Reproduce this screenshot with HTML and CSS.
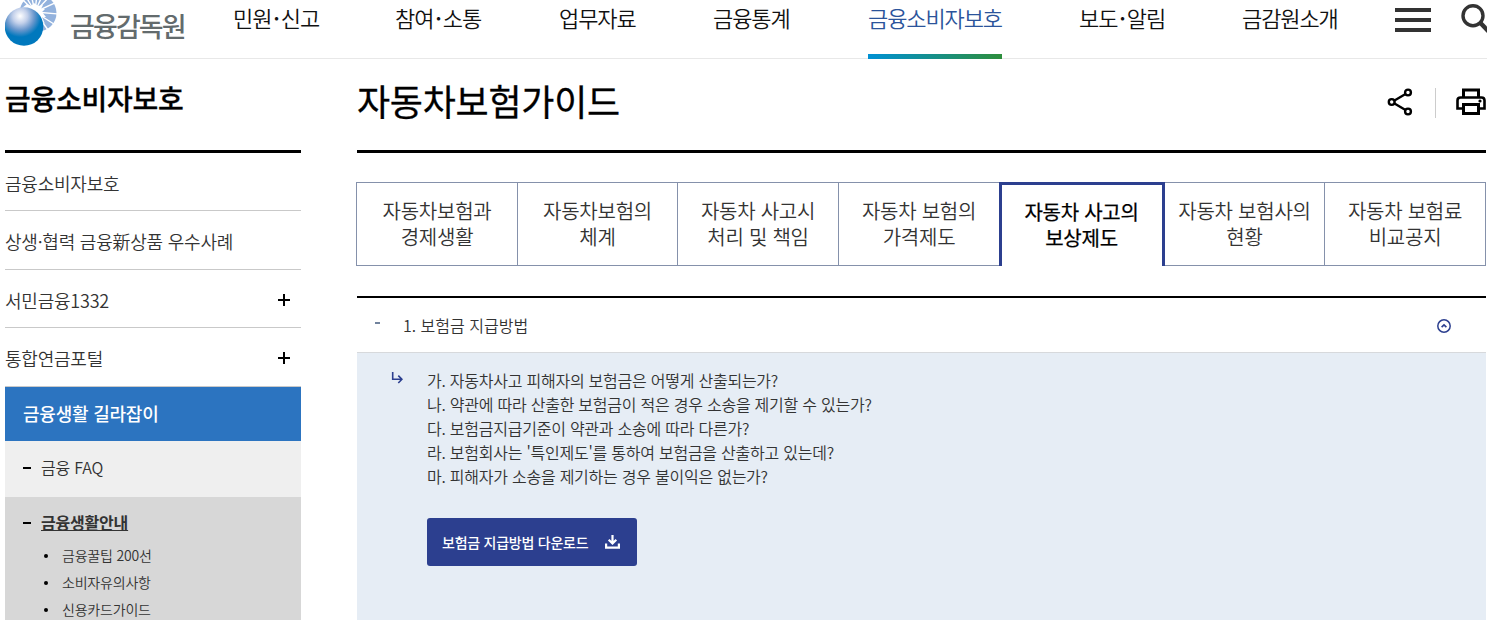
FILE: index.html
```html
<!DOCTYPE html>
<html lang="ko">
<head>
<meta charset="utf-8">
<title>자동차보험가이드</title>
<link rel="stylesheet" href="styles.css">
</head>
<body>
<header class="header">
  <a class="logo">
    <svg class="logo-mark" width="52" height="46" viewBox="0 0 52 46">
      <defs>
        <radialGradient id="ball" cx="0.4" cy="0.23" r="0.64">
          <stop offset="0" stop-color="#fff"/>
          <stop offset="0.3" stop-color="#c3d0ea"/>
          <stop offset="0.58" stop-color="#6796cc"/>
          <stop offset="0.85" stop-color="#0078bd"/>
        </radialGradient>
      </defs>
      <circle cx="33" cy="13" r="18.500" fill="#93b2dd"/>
      <path d="M17 8L22 4L26 6L29 3L33 6L38 5L36 9L40 9L37 12L41 17L37 17L40 24L34 18z" fill="#fff"/>
      <path d="M30 12L14 -4M30 12L20 -5M30 12L26 -6M30 12L32 -6M30 12L38 -6M30 12L46 -5M30 12L54 1M30 12L54 14M30 12L52 26M30 12L46 34" stroke="#fff" stroke-width="1.400"/>
      <circle cx="19" cy="26.500" r="19.300" fill="url(#ball)"/>
    </svg>
    <span class="logo-text">금융감독원</span>
  </a>
  <nav class="nav">
    <a><span>민원<em>·</em>신고</span></a>
    <a><span>참여<em>·</em>소통</span></a>
    <a><span>업무자료</span></a>
    <a><span>금융통계</span></a>
    <a class="current"><span>금융소비자보호</span></a>
    <a><span>보도<em>·</em>알림</span></a>
    <a><span>금감원소개</span></a>
  </nav>
  <div class="menu-icon"><i></i><i></i><i></i></div>
  <svg class="search-icon" width="28" height="34" viewBox="0 0 28 34" fill="none" stroke="#333">
    <circle cx="13" cy="15.700" r="10" stroke-width="3.400"/>
    <path d="M20 22.500L32 35" stroke-width="4.500"/>
  </svg>
</header>

<div class="page">
  <aside class="side">
    <h2 class="side-title">금융소비자보호</h2>
    <ul class="side-list">
      <li>금융소비자보호</li>
      <li>상생·협력 금융新상품 우수사례</li>
      <li>서민금융1332 <b class="plus"></b></li>
      <li>통합연금포털 <b class="plus"></b></li>
    </ul>
    <div class="side-current">금융생활 길라잡이</div>
    <div class="side-sub"><i class="dash"></i>금융 FAQ</div>
    <div class="side-open">
      <div class="side-open-title"><i class="dash"></i><u>금융생활안내</u></div>
      <ul class="side-links">
        <li>금융꿀팁 200선</li>
        <li>소비자유의사항</li>
        <li>신용카드가이드</li>
      </ul>
    </div>
  </aside>

  <main class="main">
    <div class="title-row">
      <h1>자동차보험가이드</h1>
      <div class="tools">
        <svg width="26" height="28" viewBox="0 0 26 28" fill="none" stroke="#000" stroke-width="2.400">
          <path d="M7.500 12.500L18.500 6M7.500 15.500L18.500 22"/>
          <circle cx="4.700" cy="14" r="2.900"/><circle cx="21" cy="4.500" r="2.900"/><circle cx="21" cy="23.500" r="2.900"/>
        </svg>
        <i class="divider"></i>
        <svg width="30" height="28" viewBox="0 0 30 28" fill="none" stroke="#000" stroke-width="3">
          <path d="M7.500 9V1.900h15V9"/>
          <path d="M7 20.500H1.500V12.500Q1.500 9.500 4.500 9.500H25.500Q28.500 9.500 28.500 12.500V20.500H23" stroke-width="2.600"/>
          <path d="M7.500 16.500h15v9h-15z"/>
          <circle cx="24" cy="13" r="1.600" fill="#000" stroke="none"/>
        </svg>
      </div>
    </div>
    <div class="tabs">
      <a>자동차보험과<br>경제생활</a>
      <a>자동차보험의<br>체계</a>
      <a>자동차 사고시<br>처리 및 책임</a>
      <a class="before">자동차 보험의<br>가격제도</a>
      <a class="active">자동차 사고의<br>보상제도</a>
      <a>자동차 보험사의<br>현황</a>
      <a>자동차 보험료<br>비교공지</a>
    </div>
    <section class="accordion">
      <div class="question">
        <i class="q-dash"></i>
        <span>1. 보험금 지급방법</span>
        <svg width="14" height="14" viewBox="0 0 14 14" fill="none" stroke="#2c3f8f">
          <circle cx="7" cy="7" r="6.200" stroke-width="1.500"/>
          <path d="M4.600 8.200L7 5.900L9.400 8.200" stroke-width="1.600"/>
        </svg>
      </div>
      <div class="answer">
        <svg class="arrow" width="12" height="13" viewBox="0 0 12 13" fill="none" stroke="#2c3f8f" stroke-width="1.600">
          <path d="M1.700 0V7.300H10.500M7.300 3.600L10.900 7.300L7.300 11"/>
        </svg>
        <div>
          <p>가. 자동차사고 피해자의 보험금은 어떻게 산출되는가?<br>나. 약관에 따라 산출한 보험금이 적은 경우 소송을 제기할 수 있는가?<br>다. 보험금지급기준이 약관과 소송에 따라 다른가?<br>라. 보험회사는 '특인제도'를 통하여 보험금을 산출하고 있는데?<br>마. 피해자가 소송을 제기하는 경우 불이익은 없는가?</p>
          <a class="download">보험금 지급방법 다운로드
            <svg width="15" height="14" viewBox="0 0 15 14" fill="none" stroke="#fff" stroke-width="2.200">
              <path d="M7.500 0V7M3.700 4.700L7.500 8.500L11.300 4.700M1.100 8.500V12.600H13.900V8.500"/>
            </svg>
          </a>
        </div>
      </div>
    </section>
  </main>
</div>
</body>
</html>
```

FILE: styles.css
```css
* { box-sizing: border-box; }
body {
  margin: 0;
  height: 620px;
  overflow: hidden;
  background: #fff;
  color: #333;
  font-family: "Noto Sans CJK KR DemiLight", "Noto Sans CJK KR", sans-serif;
  font-weight: 300;
}
ul, p, h1, h2 { margin: 0; padding: 0; list-style: none; }
i, b { display: block; }

.logo-text, .side-title, .side-current, .side-open-title, .download {
  font-family: "Noto Sans CJK KR", sans-serif;
  font-weight: 500;
}

.header {
  display: flex;
  height: 59px;
  padding-left: 5px;
  border-bottom: 1px solid #e8e8e8;
}
.logo { display: flex; width: 228px; flex: none; }
.logo-mark { display: block; flex: none; }
.logo-text {
  margin: 6px 0 0 13px;
  font-size: 27px;
  line-height: 40px;
  letter-spacing: -1.900px;
  color: #636b6d;
  white-space: nowrap;
}
.nav {
  display: grid;
  grid-template-columns: 162px 164px 154px 155px 211px 163px 153px;
  font-size: 22px;
  letter-spacing: -0.050em;
  color: #111;
}
.nav span {
  display: block;
  width: max-content;
  height: 59px;
  line-height: 35px;
  white-space: nowrap;
}
.nav em { margin: 0 2px; font-style: normal; font-weight: 500; font-family: "Noto Sans CJK KR", sans-serif; }
.nav .current span {
  color: #2b549b;
  background: linear-gradient(90deg, #0091d4, #2d8e3c) 0 54px / 100% 5px no-repeat;
}
.menu-icon {
  display: flex;
  flex-direction: column;
  gap: 6px;
  width: 36px;
  flex: none;
  padding-top: 8px;
}
.menu-icon i { height: 4px; background: #333; }
.search-icon { display: block; flex: none; margin-left: 29px; }

.page {
  display: grid;
  grid-template-columns: 296px 1130px;
  column-gap: 55px;
  padding-left: 5px;
}
.side-title {
  height: 94px;
  border-bottom: 3px solid #000;
  font-size: 28px;
  line-height: 79px;
  letter-spacing: -0.250px;
  font-weight: 500;
  -webkit-text-stroke: 0.300px #000;
  color: #000;
}
.side-list li {
  display: flex;
  align-items: center;
  justify-content: space-between;
  height: 58.400px;
  padding: 3px 11px 0 0;
  border-bottom: 1px solid #c9c9c9;
  font-size: 18px;
  letter-spacing: -0.220px;
}
.side-list li:nth-child(even) { padding-top: 2px; }
.side-list li:last-child { height: 58.800px; }
.plus {
  width: 12px;
  height: 12px;
  background:
    linear-gradient(#000, #000) center / 12px 2px no-repeat,
    linear-gradient(#000, #000) center / 2px 12px no-repeat;
}
.side-current {
  height: 54px;
  padding-left: 18px;
  background: #2c74c0;
  color: #fff;
  font-size: 18px;
  letter-spacing: -0.220px;
  line-height: 53px;
}
.dash { width: 8px; height: 2px; margin: 1px 10px 0 0; background: #000; }
.side-sub, .side-open-title {
  display: flex;
  align-items: center;
  padding-left: 18px;
  font-size: 16px;
  letter-spacing: -0.200px;
}
.side-sub { height: 56px; padding-bottom: 3px; background: #efefef; }
.side-open { height: 123px; background: #d7d7d7; }
.side-open-title { height: 45px; padding-top: 6px; font-weight: 700; }
.side-links li {
  display: flex;
  align-items: center;
  height: 27px;
  padding-left: 39px;
  font-size: 14px;
  letter-spacing: -0.200px;
}
.side-links li::before {
  content: "";
  width: 4px;
  height: 4px;
  margin: 1px 14px 0 0;
  border-radius: 50%;
  background: #000;
}

.title-row {
  display: flex;
  justify-content: space-between;
  height: 94px;
  margin-left: 1px;
  border-bottom: 3px solid #000;
}
.title-row h1 {
  font-family: "Noto Sans CJK KR", sans-serif;
  font-size: 36px;
  font-weight: 400;
  -webkit-text-stroke: 0.300px #000;
  line-height: 83px;
  letter-spacing: -0.250px;
  color: #000;
}
.tools { display: flex; align-items: center; height: 85px; }
.divider { width: 1px; height: 30px; margin: 3px 20px 0 22px; background: #ccc; }

.tabs {
  display: grid;
  grid-template-columns: 162px 160px 161px 160px 166px 160px 161px;
  height: 84px;
  margin-top: 29px;
  font-size: 20px;
  line-height: 26px;
  letter-spacing: -0.250px;
  text-align: center;
}
.tabs a {
  padding-top: 15px;
  border: solid #8591ab;
  border-width: 1px 1px 1px 0;
  white-space: nowrap;
}
.tabs a:first-child { border-left-width: 1px; }
.tabs .before { border-right-width: 0; }
.tabs .active {
  padding: 14px 1px 0 0;
  border: 3px solid #2c3f8f;
  border-bottom: 0;
  color: #000;
  font-family: "Noto Sans CJK KR", sans-serif;
  font-weight: 400;
  -webkit-text-stroke: 0.250px #000;
}

.accordion { margin: 30px 0 0 1px; border-top: 2px solid #000; }
.question {
  display: flex;
  align-items: center;
  height: 55px;
  padding: 2px 35px 0 18px;
  border-bottom: 1px solid #d7d9dc;
  font-size: 16px;
}
.question span { margin-top: -2px; }
.q-dash { width: 5px; height: 2px; margin: -7px 23px 0 0; background: #71839d; }
.question svg { margin-left: auto; }
.answer {
  display: flex;
  height: 267px;
  padding: 15px 0 0 34px;
  background: #e6edf5;
  font-size: 16px;
  line-height: 24px;
  letter-spacing: -0.240px;
}
.arrow { margin: 4px 24px 0 0; }
.download {
  display: flex;
  align-items: center;
  gap: 17px;
  width: 210px;
  height: 48px;
  margin-top: 30px;
  padding: 0 0 1px 15px;
  border-radius: 3px;
  background: #2c3f8f;
  color: #fff;
  font-size: 14px;
  letter-spacing: -0.250px;
}
```
